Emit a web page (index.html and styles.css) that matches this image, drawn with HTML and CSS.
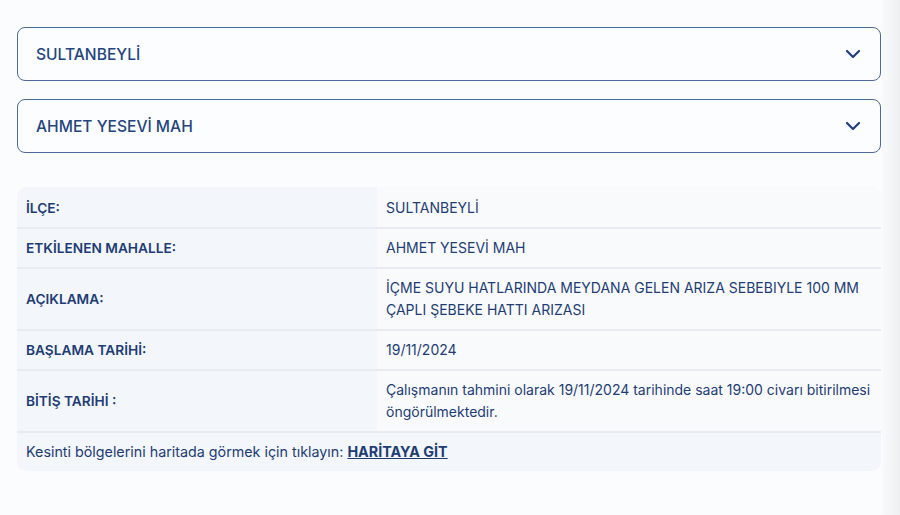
FILE: index.html
```html
<!DOCTYPE html>
<html lang="tr">
<head>
<meta charset="utf-8">
<link rel="stylesheet" href="styles.css">
</head>
<body>
<div class="page">
  <main class="content">
    <div class="select">
      <span class="select-text">SULTANBEYLİ</span>
      <svg class="chev" width="16" height="10" viewBox="0 0 16 10"><path d="M2 2 L8 8 L14 2" fill="none" stroke="#1e3f7a" stroke-width="2.2" stroke-linecap="round" stroke-linejoin="round"/></svg>
    </div>
    <div class="select">
      <span class="select-text">AHMET YESEVİ MAH</span>
      <svg class="chev" width="16" height="10" viewBox="0 0 16 10"><path d="M2 2 L8 8 L14 2" fill="none" stroke="#1e3f7a" stroke-width="2.2" stroke-linecap="round" stroke-linejoin="round"/></svg>
    </div>
    <div class="info">
      <div class="row first">
        <div class="label">İLÇE:</div>
        <div class="value">SULTANBEYLİ</div>
      </div>
      <div class="row">
        <div class="label">ETKİLENEN MAHALLE:</div>
        <div class="value">AHMET YESEVİ MAH</div>
      </div>
      <div class="row">
        <div class="label">AÇIKLAMA:</div>
        <div class="value">İÇME SUYU HATLARINDA MEYDANA GELEN ARIZA SEBEBIYLE 100 MM ÇAPLI ŞEBEKE HATTI ARIZASI</div>
      </div>
      <div class="row">
        <div class="label">BAŞLAMA TARİHİ:</div>
        <div class="value">19/11/2024</div>
      </div>
      <div class="row">
        <div class="label">BİTİŞ TARİHİ :</div>
        <div class="value">Çalışmanın tahmini olarak 19/11/2024 tarihinde saat 19:00 civarı bitirilmesi öngörülmektedir.</div>
      </div>
      <div class="footer">Kesinti bölgelerini haritada görmek için tıklayın: <a class="maplink" href="#">HARİTAYA GİT</a></div>
    </div>
  </main>
  <div class="edge"></div>
</div>
</body>
</html>
```

FILE: styles.css
```css
html, body {
  margin: 0;
  padding: 0;
  height: 100%;
}
body {
  background: #fbfcfe;
  font-family: Inter, "Noto Sans", sans-serif;
  color: #1e3d74;
}
.page {
  display: flex;
  min-height: 100%;
}
.content {
  flex: 1;
  padding: 27px 1px 0 17px;
}
.edge {
  width: 18px;
  background: linear-gradient(to right, #f9fafb, #eeeff1);
}
.select {
  display: flex;
  align-items: center;
  justify-content: space-between;
  height: 52px;
  border: 1px solid #4d6a9c;
  border-radius: 8px;
  background: #fcfdfe;
  padding: 0 19px 0 18px;
  margin-bottom: 18px;
}
.select-text {
  font-size: 15.6px;
  font-weight: 500;
  color: #25457d;
}
.chev {
  display: block;
}
.info {
  margin-top: 34px;
  border-radius: 10px;
  overflow: hidden;
  background: #f3f6fb;
}
.row {
  display: flex;
  border-bottom: 2px solid #e8ebf0;
}
.label {
  width: 342px;
  flex: none;
  padding: 8px 9px;
  display: flex;
  align-items: center;
  font-size: 13.7px;
  font-weight: 600;
  line-height: 22px;
  background: #f3f6fb;
}
.value {
  flex: 1;
  padding: 8px 10px 8px 9px;
  font-size: 14px;
  line-height: 22px;
  background: #f9fafc;
}
.row.first .label,
.row.first .value {
  padding-top: 10px;
}
.footer {
  padding: 8px 9px;
  font-size: 14.3px;
  line-height: 22px;
  background: #f3f6fb;
}
.maplink {
  color: #1e3d74;
  font-weight: 700;
  text-decoration: underline;
}
```
